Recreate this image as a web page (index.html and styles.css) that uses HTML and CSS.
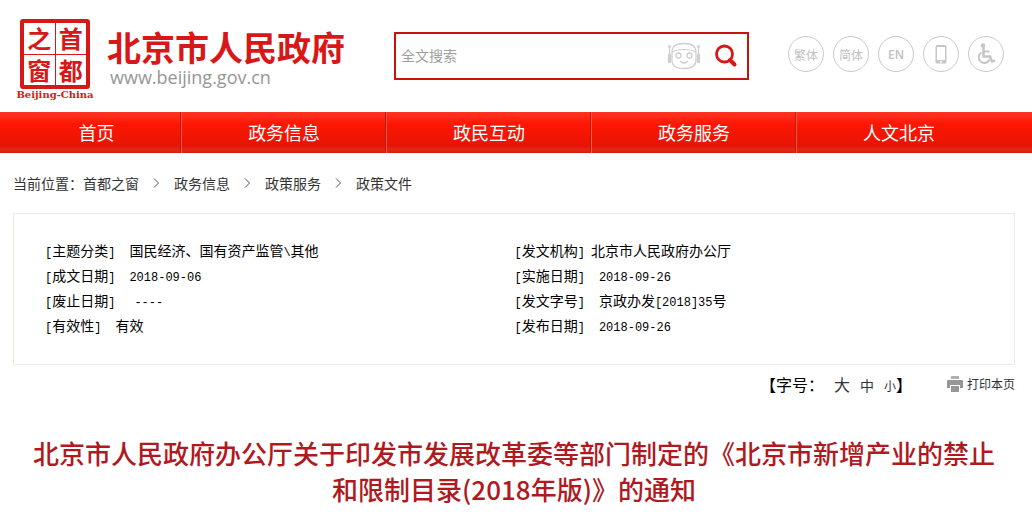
FILE: index.html
```html
<!DOCTYPE html>
<html lang="zh-CN">
<head>
<meta charset="utf-8">
<title>北京市人民政府</title>
<link rel="stylesheet" href="styles.css">
</head>
<body>
<header class="header">
  <a class="brand" href="#">
    <span class="emblem">
      <span class="seal"><span class="seal-char">之</span><span class="seal-char">首</span><span class="seal-char">窗</span><span class="seal-char">都</span></span>
      <span class="emblem-caption">Beijing-China</span>
    </span>
    <span class="brand-text">
      <span class="brand-name">北京市人民政府</span>
      <span class="brand-url">www.beijing.gov.cn</span>
    </span>
  </a>
  <form class="search" role="search">
    <input class="search-input" type="text" placeholder="全文搜索" aria-label="全文搜索">
    <button class="icon-button" type="button" aria-label="智能问答">
      <svg width="34" height="28" viewBox="0 0 34 28" fill="none" stroke="#cfcfcf">
        <path d="M5 10C5 4 9 1.500 17 1.500S29 4 29 10V18C29 24 25 26.500 17 26.500S5 24 5 18Z" stroke-width="1.300"/>
        <path d="M5.500 10C9 7.500 12 7.500 17 7.500S25 7.500 28.500 10" stroke-width="1.200"/>
        <circle cx="11.500" cy="13.500" r="2.500" stroke-width="1.300"/><circle cx="22.500" cy="13.500" r="2.500" stroke-width="1.300"/>
        <path d="M13 19Q17 23 21 19" stroke-width="1.300"/>
        <path d="M2.500 5V12M31.500 5V12" stroke-width="1.300"/>
        <path d="M2.500 12V21M31.500 12V21" stroke-width="3"/>
        <circle cx="2.500" cy="4.500" r="1.500" fill="#cfcfcf" stroke="none"/><circle cx="31.500" cy="4.500" r="1.500" fill="#cfcfcf" stroke="none"/>
      </svg>
    </button>
    <button class="icon-button" type="submit" aria-label="搜索">
      <svg width="24" height="24" viewBox="0 0 24 24" fill="none" stroke="#d81818">
        <circle cx="10.500" cy="10" r="8" stroke-width="2.800"/>
        <path d="M16 16L20.500 20.500" stroke-width="4" stroke-linecap="round"/>
      </svg>
    </button>
  </form>
  <div class="tools">
    <a class="tool" href="#">繁体</a>
    <a class="tool" href="#">简体</a>
    <a class="tool tool-en" href="#">EN</a>
    <a class="tool" href="#" aria-label="手机版">
      <svg width="12" height="19" viewBox="0 0 12 19"><path fill="#c6c6c6" fill-rule="evenodd" d="M2 0H10Q11.500 0 11.500 2V17Q11.500 18.500 10 18.500H2Q.5 18.500 .5 17V2Q.5 0 2 0ZM2 2V15H10V2ZM5 16V17.500H7V16Z"/></svg>
    </a>
    <a class="tool" href="#" aria-label="无障碍">
      <svg width="20" height="22" viewBox="0 0 20 22" fill="none" stroke="#c6c6c6" stroke-width="2">
        <circle cx="7" cy="2.500" r="2.300" fill="#c6c6c6" stroke="none"/>
        <path d="M7.500 4V13.500H14L16 18.500L19 17.500" stroke-width="2.500"/>
        <path d="M8 8.500H13.500"/>
        <path d="M5.500 9.500A5.600 5.600 0 1 0 13.500 16.500"/>
      </svg>
    </a>
  </div>
</header>

<nav class="nav">
  <a class="nav-item nav-home" href="#">首页</a>
  <a class="nav-item" href="#">政务信息</a>
  <a class="nav-item" href="#">政民互动</a>
  <a class="nav-item" href="#">政务服务</a>
  <a class="nav-item" href="#">人文北京</a>
</nav>

<main class="content">
  <div class="crumbs">
    <span>当前位置：<a href="#">首都之窗</a></span>
    <svg class="chevron" viewBox="0 0 6 10"><path d="M.5 .5L5 5L.5 9.500"/></svg>
    <a href="#">政务信息</a>
    <svg class="chevron" viewBox="0 0 6 10"><path d="M.5 .5L5 5L.5 9.500"/></svg>
    <a href="#">政策服务</a>
    <svg class="chevron" viewBox="0 0 6 10"><path d="M.5 .5L5 5L.5 9.500"/></svg>
    <a href="#">政策文件</a>
  </div>

  <section class="info">
    <dl class="info-column">
      <div class="info-row"><dt><span class="mono">[</span>主题分类<span class="mono">]</span></dt><dd>国民经济、国有资产监管<span class="mono">\</span>其他</dd></div>
      <div class="info-row"><dt><span class="mono">[</span>成文日期<span class="mono">]</span></dt><dd><span class="mono">2018-09-06</span></dd></div>
      <div class="info-row"><dt><span class="mono">[</span>废止日期<span class="mono">]</span></dt><dd class="empty"><span class="mono">----</span></dd></div>
      <div class="info-row"><dt><span class="mono">[</span>有效性<span class="mono">]</span></dt><dd>有效</dd></div>
    </dl>
    <dl class="info-column">
      <div class="info-row"><dt><span class="mono">[</span>发文机构<span class="mono">]</span></dt><dd class="near">北京市人民政府办公厅</dd></div>
      <div class="info-row"><dt><span class="mono">[</span>实施日期<span class="mono">]</span></dt><dd><span class="mono">2018-09-26</span></dd></div>
      <div class="info-row"><dt><span class="mono">[</span>发文字号<span class="mono">]</span></dt><dd>京政办发<span class="mono">[2018]35</span>号</dd></div>
      <div class="info-row"><dt><span class="mono">[</span>发布日期<span class="mono">]</span></dt><dd><span class="mono">2018-09-26</span></dd></div>
    </dl>
  </section>

  <div class="actions">
    <div class="sizes">
      <span class="sizes-label">【字号：</span>
      <button class="size size-large" type="button">大</button>
      <button class="size size-medium" type="button">中</button>
      <span class="size-end"><button class="size size-small" type="button">小</button>】</span>
    </div>
    <button class="print" type="button">
      <svg width="16" height="16" viewBox="0 0 16 16" fill="#969696"><path d="M4 0H12V3H4Z" opacity=".75"/><path d="M1 4H15Q16 4 16 5V12H13V9H3V12H0V5Q0 4 1 4Z"/><path d="M4 10H12V16H4Z"/></svg>
      打印本页
    </button>
  </div>

  <h1 class="title">北京市人民政府办公厅关于印发市发展改革委等部门制定的《北京市新增产业的禁止和限制目录(2018年版)》的通知</h1>
</main>
</body>
</html>
```

FILE: styles.css
```css
* {
  box-sizing: border-box;
}

body {
  margin: 0;
  background: #fff;
  color: #000;
  font-family: "Noto Sans CJK SC", sans-serif;
  font-size: 14px;
}

a {
  color: inherit;
  text-decoration: none;
}

button {
  padding: 0;
  border: 0;
  background: none;
  color: inherit;
  font-family: inherit;
  cursor: pointer;
}

.header {
  display: flex;
  align-items: flex-start;
  padding: 0 28px 0 15px;
  height: 112px;
}

.brand {
  display: flex;
  gap: 12px;
  flex: none;
  width: 379px;
  padding-top: 19px;
}

.emblem {
  display: flex;
  flex-direction: column;
  align-items: center;
  width: 80px;
}

.seal {
  display: grid;
  grid-template-columns: 1fr 1fr;
  gap: 1px;
  width: 70px;
  height: 70px;
  padding: 4px;
  border-radius: 3px;
  background: #d81818;
}

.seal-char {
  display: flex;
  align-items: center;
  justify-content: center;
  background: #fff;
  color: #d81818;
  font-size: 24px;
  font-weight: 700;
  line-height: 30px;
}

.emblem-caption {
  color: #d81818;
  font: bold 10px/12px "DejaVu Serif", serif;
  white-space: nowrap;
}

.brand-text {
  display: flex;
  flex-direction: column;
  padding-top: 8px;
}

.brand-name {
  color: #d81818;
  font-size: 34px;
  font-weight: 700;
  line-height: 39px;
}

.brand-url {
  padding-left: 3px;
  color: #969696;
  font: 18px/22px "Open Sans", sans-serif;
}

.search {
  display: flex;
  flex: 1;
  align-items: center;
  gap: 13px;
  min-width: 0;
  height: 48px;
  margin-top: 32px;
  padding-right: 9px;
  border: 2px solid #c8110b;
}

.search-input {
  flex: 1;
  min-width: 0;
  height: 40px;
  padding: 0 5px 2px;
  border: 0;
  background: transparent;
  font: inherit;
  outline: none;
}

.search-input::placeholder {
  color: #a0a0a0;
}

.icon-button {
  display: flex;
}

.tools {
  display: flex;
  gap: 9px;
  margin: 36px 0 0 39px;
}

.tool {
  display: flex;
  align-items: center;
  justify-content: center;
  width: 36px;
  height: 36px;
  border: 1px solid #c9c9c9;
  border-radius: 50%;
  color: #c0c0c0;
  font-size: 12px;
}

.tool-en {
  font-family: "Open Sans", sans-serif;
  font-weight: 600;
}

.nav {
  display: flex;
  height: 41px;
  padding: 0 31px 0 12px;
  background: linear-gradient(#ff3322 0, #ff2a18 5px, #fe1603 12px, #e61404 35px, #e12718 36px, #e02416 39px, #cf1a0d 41px);
}

.nav-item {
  flex: 205;
  border-left: 1px solid #ff5648;
  box-shadow: -1px 0 #c9150a;
  color: #fff;
  font-size: 18px;
  line-height: 40px;
  text-align: center;
}

.nav-home {
  flex: 170;
  border-left: 0;
  box-shadow: none;
}

.content {
  padding: 0 17px 0 13px;
}

.crumbs {
  display: flex;
  align-items: center;
  gap: 14px;
  height: 60px;
  padding-bottom: 1px;
  color: #333;
}

.chevron {
  width: 7px;
  height: 10px;
  fill: none;
  stroke: #555;
}

.info {
  display: grid;
  grid-template-columns: 470fr 500fr;
  padding: 24px 0 26px 31px;
  border: 1px solid #ebebe1;
}

.info-column {
  margin: 0;
}

.info-row {
  display: flex;
  gap: 14px;
  height: 25px;
  line-height: 25px;
}

.info-row dd {
  margin: 0;
}

.info-row .near {
  margin-left: -8px;
}

.info-row .empty {
  margin-left: 5px;
}

.mono {
  font-family: "Liberation Mono", monospace;
  font-size: 12px;
  line-height: 12px;
}

.info-row dt,
.info-row dd {
  line-height: 25px;
}

.actions {
  display: flex;
  align-items: center;
  justify-content: flex-end;
  gap: 35px;
  height: 37px;
  font-size: 16px;
}

.sizes {
  display: flex;
  align-items: baseline;
  gap: 10px;
}

.size {
  color: #333;
}

.size-large {
  font-size: 16px;
}

.size-medium {
  font-size: 14px;
}

.size-small {
  font-size: 12px;
}

.print {
  display: flex;
  align-items: center;
  gap: 4px;
  color: #333;
  font-size: 12px;
}

.title {
  margin: 33px 0 0;
  padding: 0 8px;
  color: #b01a1f;
  font-size: 26px;
  font-weight: 500;
  line-height: 36px;
  text-align: center;
}
```
